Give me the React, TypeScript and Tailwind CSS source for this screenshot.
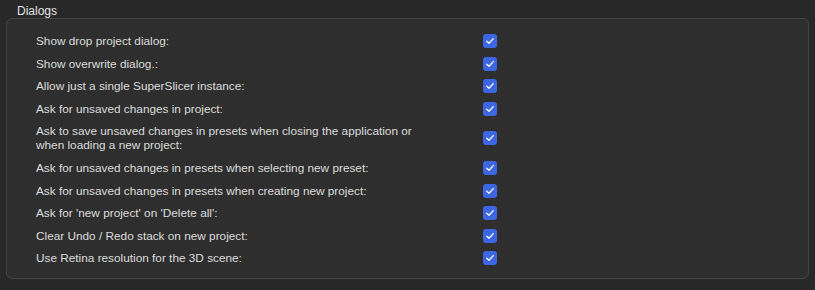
import React from 'react';

const rows: string[][] = [
  ['Show drop project dialog:'],
  ['Show overwrite dialog.:'],
  ['Allow just a single SuperSlicer instance:'],
  ['Ask for unsaved changes in project:'],
  ['Ask to save unsaved changes in presets when closing the application or', 'when loading a new project:'],
  ['Ask for unsaved changes in presets when selecting new preset:'],
  ['Ask for unsaved changes in presets when creating new project:'],
  ["Ask for 'new project' on 'Delete all':"],
  ['Clear Undo / Redo stack on new project:'],
  ['Use Retina resolution for the 3D scene:'],
];

const Check: React.FC = () => (
  <div className="w-[14px] h-[14px] rounded-[3px] bg-[#3d66e3] flex items-center justify-center">
    <svg width="10" height="10" viewBox="0 0 10 10" fill="none">
      <path d="M1.8 5.2 L4 7.3 L8.3 2.6" stroke="#ffffff" strokeWidth="1.3" strokeLinecap="round" strokeLinejoin="round" />
    </svg>
  </div>
);

const App: React.FC = () => {
  return (
    <div className="w-[815px] h-[290px] bg-[#282828] text-[#dddddd] font-['Liberation_Sans',Arial,sans-serif] text-[11.8px] leading-[14px] pt-[4px] px-[6px]">
      {/* Section title */}
      <div className="pl-[11px] h-[14px] text-[12px] text-[#e4e4e4]">Dialogs</div>

      <div className="w-[803px] h-[261px] rounded-[6px] border border-[#444444] bg-[#2e2e2e] pt-[15px] pl-[29px]">
        <div className="flex flex-col gap-[8.6px]">
          {rows.map((lines, i) => (
            <div key={i} className="flex items-center">
              <div className="w-[447px]">
                {lines.map((l, j) => (
                  <div key={j}>{l}</div>
                ))}
              </div>
              <Check />
            </div>
          ))}
        </div>
      </div>
    </div>
  );
};

export default App;
